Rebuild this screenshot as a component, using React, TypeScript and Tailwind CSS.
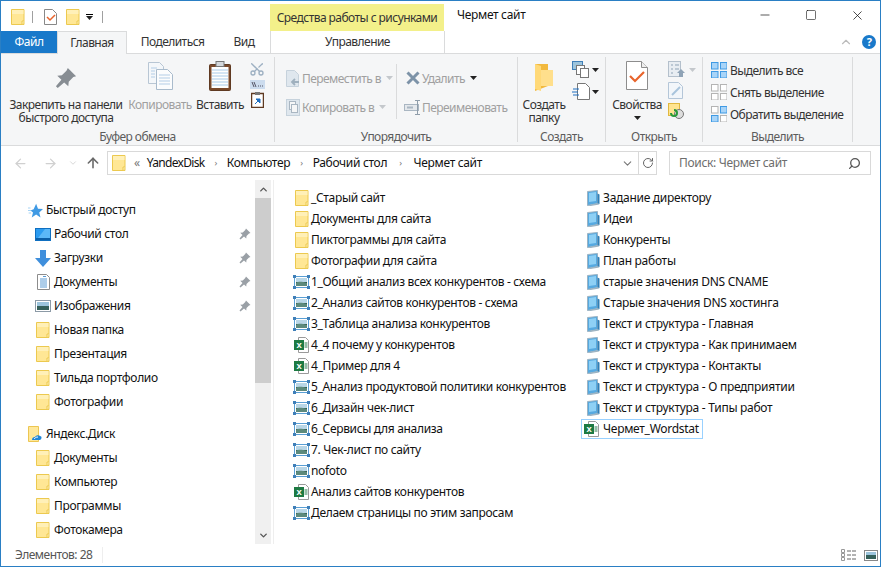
import { ChevronDown, ChevronUp, ArrowLeft, ArrowRight, ArrowUp, RotateCw, Search, Scissors, Minus, X, Square } from "lucide-react";

const Folder = ({ size = 16 }: { size?: number }) => (
  <svg width={size} height={size} viewBox="0 0 16 16" className="shrink-0">
    <path d="M1.500 .5h12.500v15H1.500z" fill="#ffe795" stroke="#ecc94f" />
    <path d="M2 1h11.500v4H2z" fill="#fff0b8" />
    <path d="M12 15.500v-3.500h2" fill="#fff3c4" stroke="#ecc94f" />
  </svg>
);

const PicFile = () => (
  <svg width="17" height="16" viewBox="0 0 17 16" className="shrink-0">
    <rect x="1.500" y="2.500" width="14" height="11" fill="#fff" stroke="#5a9fd4" />
    <rect x="3" y="4" width="11" height="4" fill="#b9d6e6" />
    <rect x="3" y="8" width="11" height="4" fill="#2e5a4c" />
    <path d="M3 9c3-2 6-1 11 0v3H3z" fill="#5d8a7c" />
    <path d="M0 1h3v3H0zM14 1h3v3h-3zM0 12h3v3H0zM14 12h3v3h-3z" fill="#3f7fb8" />
  </svg>
);

const BlueFile = () => (
  <svg width="16" height="16" viewBox="0 0 16 16" className="shrink-0">
    <path d="M2.500 1.500l10-1v13l-10 2z" fill="#56a9e0" stroke="#9db3c2" />
    <path d="M4 3l7-1v9l-7 1z" fill="#8ed0f5" />
    <path d="M12.500 3.500l2 1v9.500l-2-.5z" fill="#2f7fb6" />
    <path d="M2.500 15.500l10-2 2 1-9 1.500z" fill="#9db3c2" />
  </svg>
);

const ExcelFile = ({ size = 16 }: { size?: number }) => (
  <svg width={size} height={size} viewBox="0 0 16 16" className="shrink-0">
    <path d="M4.500 .5h7l3 3v12h-10z" fill="#fff" stroke="#9a9a9a" />
    <path d="M10.500 6h3M10.500 8h3M10.500 10h3" stroke="#2a7d4f" fill="none" />
    <rect x="0" y="3" width="10" height="10" fill="#1d7a43" />
    <text x="5" y="11" textAnchor="middle" fontSize="9.500" fontWeight="700" fill="#fff" fontFamily="Liberation Sans">x</text>
  </svg>
);

const GreyPin = ({ size = 12, color = "#9aa0a6" }: { size?: number; color?: string }) => (
  <svg width={size} height={size} viewBox="0 0 24 24">
    <path d="M14 1l9 9-3 1-5 5-.5 5L10 17 3 23l-2-2 6-7-4.500-4.500 5-.5 5-5z" fill={color} />
  </svg>
);

const DesktopIcon = () => (
  <svg width="16" height="13" viewBox="0 0 16 13" className="shrink-0">
    <rect x=".5" y=".5" width="15" height="12" fill="#2b9bf0" stroke="#0f6fc0" />
    <path d="M10 1L3 10h12V1z" fill="#5cb8f8" />
    <rect x="1" y="10" width="14" height="2" fill="#0c5fa8" />
  </svg>
);

const DownloadIcon = () => (
  <svg width="16" height="17" viewBox="0 0 16 17" className="shrink-0">
    <path d="M5 0h6v8h5l-8 9-8-9h5z" fill="#3f8fdc" />
  </svg>
);

const DocsIcon = () => (
  <svg width="13" height="16" viewBox="0 0 13 16" className="shrink-0">
    <path d="M.5.5h9l3 3v12H.5z" fill="#fff" stroke="#8c8c8c" />
    <path d="M3 5h7M3 7h7M3 9h7M3 11h7M3 13h7" stroke="#5a9bd4" />
    <path d="M6 2.500h3" stroke="#5a9bd4" />
  </svg>
);

const ImagesIcon = () => (
  <svg width="16" height="12" viewBox="0 0 16 12" className="shrink-0">
    <rect x=".5" y=".5" width="15" height="11" fill="#fff" stroke="#8c9aa6" />
    <rect x="2" y="2" width="12" height="4" fill="#9cc4dc" />
    <rect x="2" y="6" width="12" height="4" fill="#35605a" />
  </svg>
);

const QuickStar = () => (
  <svg width="15" height="15" viewBox="0 0 24 24" className="shrink-0">
    <path d="M13 1l3 8 8 .5-6 5.500 2 8-7-4.500L6 23l2-8-4-3 5-2z" fill="#3f9ae4" />
    <path d="M0 12h5M1 16h4M0 8h4" stroke="#9fd0f4" strokeWidth="1.500" />
  </svg>
);

const YandexFolder = () => (
  <svg width="16" height="16" viewBox="0 0 16 16" className="shrink-0">
    <path d="M1.500 .5h10v15h-10z" fill="#ffe89a" stroke="#ecc652" />
    <path d="M5 14c0-2 1-3 3-3 1-2 4-2 5-1 2 0 2 3 0 4z" fill="#1f86d8" />
    <path d="M7 13c1-1 2-2 4-2" stroke="#fff" fill="none" />
  </svg>
);

const PasteIcon = () => (
  <svg width="22" height="30" viewBox="0 0 22 30">
    <rect x=".5" y="3.500" width="21" height="26" rx="1" fill="#7a4a2c" stroke="#5f3a22" />
    <rect x="2.500" y="6" width="17" height="21" fill="#fff" />
    <path d="M3 9h16M3 12h16M3 15h16M3 18h16M3 21h16M3 24h16" stroke="#a8cbea" />
    <rect x="7" y=".5" width="8" height="5" fill="#d4d8dc" stroke="#777" />
  </svg>
);

const CopyBig = () => (
  <svg width="25" height="28" viewBox="0 0 25 28">
    <path d="M.5.5h11l4 4v17H.5z" fill="#f4f7fa" stroke="#b8c6d4" />
    <path d="M8.500 7.500h11l5 5v15h-16z" fill="#fbfcfd" stroke="#a9bbcc" />
    <path d="M3 6h6M3 9h4M3 12h4M3 15h4M11 13h11M11 16h11M11 19h11M11 22h11" stroke="#b3cde6" />
  </svg>
);

const PropsIcon = () => (
  <svg width="22" height="29" viewBox="0 0 22 29">
    <path d="M.5.5h15l6 6v22H.5z" fill="#fff" stroke="#8d8d8d" />
    <path d="M15.500 .5v6h6" fill="#eee" stroke="#8d8d8d" />
    <path d="M4 15l5 5 9-9" fill="none" stroke="#e8642c" strokeWidth="2.200" />
  </svg>
);

const Caret = ({ light = false }: { light?: boolean }) => (
  <svg width="7" height="4" viewBox="0 0 7 4" className="shrink-0">
    <path d="M0 0h7L3.500 4z" fill={light ? "#c4c8cc" : "#222"} />
  </svg>
);

const MoveIcon = () => (
  <svg width="14" height="17" viewBox="0 0 14 17" className="shrink-0">
    <path d="M.5.5h8l4 4v12H.5z" fill="#dfe7ee" stroke="#c6d2dc" />
    <path d="M13 12H7M9 9l-3 3 3 3" stroke="#9fb0be" strokeWidth="1.800" fill="none" />
  </svg>
);
const CopyToIcon = () => (
  <svg width="14" height="17" viewBox="0 0 14 17" className="shrink-0">
    <rect x=".5" y=".5" width="13" height="16" fill="#dfe7ee" stroke="#c6d2dc" />
    <rect x="3.500" y="2.500" width="6" height="8" fill="#f5f6f7" stroke="#a9b6c2" />
    <rect x="5.500" y="5.500" width="6" height="8" fill="#f5f6f7" stroke="#a9b6c2" />
  </svg>
);
const DeleteIcon = () => (
  <svg width="14" height="14" viewBox="0 0 14 14" className="shrink-0">
    <path d="M1.500 1.500l11 11M12.500 1.500l-11 11" stroke="#7d93a8" strokeWidth="3" />
  </svg>
);
const RenameIcon = () => (
  <svg width="18" height="15" viewBox="0 0 18 15" className="shrink-0">
    <rect x=".5" y="4.500" width="14" height="6" fill="#e4e8ec" stroke="#a9b6c2" />
    <path d="M11 .5h5M13.500 .5v14M11 14.500h5" stroke="#8f9daa" />
    <rect x="3" y="6.500" width="6" height="2" fill="#a9b6c2" />
  </svg>
);
const SelectGrid = ({ fills }: { fills: [boolean, boolean, boolean, boolean] }) => (
  <svg width="16" height="16" viewBox="0 0 16 16" className="shrink-0">
    {[[0, 0], [9, 0], [0, 9], [9, 9]].map(([x, y], i) => (
      <rect key={i} x={x + 0.5} y={y + 0.5} width="6.500" height="6.500"
        fill={fills[i] ? "#a8d4f8" : "#fff"} stroke={fills[i] ? "#3f9ae4" : "#b4b4b4"} />
    ))}
  </svg>
);

const group1 = [
  { name: "_Старый сайт", kind: "folder" },
  { name: "Документы для сайта", kind: "folder" },
  { name: "Пиктограммы для сайта", kind: "folder" },
  { name: "Фотографии для сайта", kind: "folder" },
  { name: "1_Общий анализ всех конкурентов - схема", kind: "pic" },
  { name: "2_Анализ сайтов конкурентов - схема", kind: "pic" },
  { name: "3_Таблица анализа конкурентов", kind: "pic" },
  { name: "4_4 почему у конкурентов", kind: "xls" },
  { name: "4_Пример для 4", kind: "xls" },
  { name: "5_Анализ продуктовой политики конкурентов", kind: "pic" },
  { name: "6_Дизайн чек-лист", kind: "pic" },
  { name: "6_Сервисы для анализа", kind: "pic" },
  { name: "7. Чек-лист по сайту", kind: "pic" },
  { name: "nofoto", kind: "pic" },
  { name: "Анализ сайтов конкурентов", kind: "xls" },
  { name: "Делаем страницы по этим запросам", kind: "pic" },
];

const group2 = [
  "Задание директору",
  "Идеи",
  "Конкуренты",
  "План работы",
  "старые значения DNS CNAME",
  "Старые значения DNS хостинга",
  "Текст и структура - Главная",
  "Текст и структура - Как принимаем",
  "Текст и структура - Контакты",
  "Текст и структура - О предприятии",
  "Текст и структура - Типы работ",
];

const quick = [
  { name: "Рабочий стол", icon: <DesktopIcon />, pin: true },
  { name: "Загрузки", icon: <DownloadIcon />, pin: true },
  { name: "Документы", icon: <DocsIcon />, pin: true },
  { name: "Изображения", icon: <ImagesIcon />, pin: true },
  { name: "Новая папка", icon: <Folder /> },
  { name: "Презентация", icon: <Folder /> },
  { name: "Тильда портфолио", icon: <Folder /> },
  { name: "Фотографии", icon: <Folder /> },
];

const disk = ["Документы", "Компьютер", "Программы", "Фотокамера"];

function GroupLabel({ children }: { children: string }) {
  return <div className="h-[14px] text-center text-[#5c5c5c] leading-[17px] whitespace-nowrap">{children}</div>;
}

function SmallRow({ icon, label, caret, dim, select }: { icon: React.ReactNode; label: string; caret?: "dark" | "light"; dim?: boolean; select?: boolean }) {
  return (
    <div className={`flex items-center h-[22px] whitespace-nowrap ${select ? "gap-[2px]" : "gap-0"}`}>
      <span className="w-[18px] flex justify-center">{icon}</span>
      <span className={dim ? "text-[#a0a0a0]" : "text-[#333]"}>{label}</span>
      {caret && <span className="ml-[5px]"><Caret light={caret === "light"} /></span>}
    </div>
  );
}

function NavRow({ icon, label, pin, header }: { icon: React.ReactNode; label: string; pin?: boolean; header?: boolean }) {
  return (
    <div className={`flex items-center h-[24px] pr-[4px] ${header ? "pl-[26px]" : "pl-[34px]"}`}>
      <span className="w-[16px] flex justify-center">{icon}</span>
      <span className="ml-[3px] flex-1 text-[#111]">{label}</span>
      {pin && <GreyPin />}
    </div>
  );
}

export default function App() {
  return (
    <div className="w-[881px] h-[567px] overflow-hidden bg-white flex flex-col border border-[#2a7fc4] text-[12px] text-[#1a1a1a] tracking-[-0.33px]" style={{ fontFamily: '"Noto Sans", sans-serif' }}>
      {/* title */}
      <div className="flex h-[30px] shrink-0">
        <div className="w-[269px] flex items-center pl-[9px] pt-[1px]">
          <Folder />
          <span className="ml-[6px] w-px h-[12px] bg-[#a0a0a0]" />
          <span className="ml-[11px]">
            <svg width="13" height="16" viewBox="0 0 13 16"><path d="M.5.5h8l4 4v11H.5z" fill="#fff" stroke="#888" /><path d="M3 8l3 3 5-5" stroke="#e8642c" strokeWidth="1.500" fill="none" /></svg>
          </span>
          <span className="ml-[8px]"><Folder /></span>
          <span className="ml-[5px] flex flex-col items-center gap-[1px]">
            <span className="w-[7px] h-px bg-black" />
            <Caret />
          </span>
          <span className="ml-[9px] w-px h-[12px] bg-[#a0a0a0]" />
        </div>
        <div className="mt-[3px] w-[174px] h-[27px] bg-[#f3f08a] flex items-center justify-center text-[#333] tracking-[-0.55px]">Средства работы с рисунками</div>
        <div className="ml-[13px] pt-[5px] text-[#111]">Чермет сайт</div>
        <div className="ml-auto flex items-start pt-[1px]">
          <span className="w-[46px] h-[26px] flex items-center justify-center"><Minus size={14} strokeWidth={1.2} color="#111" /></span>
          <span className="w-[46px] h-[26px] flex items-center justify-center"><Square size={12} strokeWidth={1.2} color="#111" /></span>
          <span className="w-[46px] h-[26px] flex items-center justify-center"><X size={15} strokeWidth={1.2} color="#111" /></span>
        </div>
      </div>
      {/* tabs */}
      <div className="flex h-[23px] shrink-0 items-stretch border-b border-[#dadbdc] tracking-[-0.55px]">
        <div className="w-[56px] bg-[#1979ca] text-white flex items-center justify-center">Файл</div>
        <div className="w-[70px] h-[23px] bg-[#f5f6f7] border-x border-t border-[#dadbdc] flex items-center justify-center text-[#333]">Главная</div>
        <div className="w-[91px] flex items-center justify-center text-[#333]">Поделиться</div>
        <div className="w-[52px] flex items-center justify-center text-[#333]">Вид</div>
        <div className="w-[175px] border-x border-[#dadbdc] flex items-center justify-center text-[#333]">Управление</div>
        <div className="ml-auto flex items-center pr-[4px] gap-[9px]">
          <ChevronUp size={14} color="#bbb" />
          <span className="w-[14px] h-[14px] rounded-full bg-[#1979ca] text-white font-bold text-[11px] flex items-center justify-center">?</span>
        </div>
      </div>
      {/* ribbon */}
      <div className="flex h-[92px] shrink-0 bg-[#f5f6f7] border-b border-[#dadbdc] pt-[3px] pb-[3px] leading-[13px] tracking-[-0.55px]">
        {/* clipboard */}
        <div className="w-[274px] border-r border-[#dadbdc] flex flex-col">
          <div className="flex flex-1 pl-[7px] pt-[3px]">
            <div className="w-[116px] flex flex-col items-center">
              <div className="h-[37px] pt-[7px]"><GreyPin size={22} color="#878d93" /></div>
              <div className="mt-[1px] text-center text-[#333] whitespace-nowrap">Закрепить на панели<br />быстрого доступа</div>
            </div>
            <div className="w-[72px] flex flex-col items-center">
              <div className="h-[37px] pt-[2px]"><CopyBig /></div>
              <div className="mt-[1px] text-[#a0a0a0]">Копировать</div>
            </div>
            <div className="w-[48px] flex flex-col items-center">
              <div className="h-[37px] pt-[1px]"><PasteIcon /></div>
              <div className="mt-[1px] text-[#333]">Вставить</div>
            </div>
            <div className="w-[26px] flex flex-col items-center gap-[3px] pt-[1px]">
              <Scissors size={16} color="#9db0c2" className="-rotate-90" />
              <svg width="15" height="9" viewBox="0 0 15 9"><rect width="15" height="9" fill="#ccdcee" /><path d="M2 2l2 5M4 2l2 5M8 6h1M10 6h1M12 6h1" stroke="#556" /></svg>
              <svg width="13" height="16" viewBox="0 0 13 16"><rect x=".5" y="1.500" width="12" height="14" fill="#fff" stroke="#5f3a22" strokeWidth="1.500" /><rect x="4" y="0" width="5" height="3" fill="#777" /><path d="M4 12l4-4M5 7h4v4z" stroke="#1f6fc0" fill="#1f6fc0" /></svg>
            </div>
          </div>
          <GroupLabel>Буфер обмена</GroupLabel>
        </div>
        {/* organize */}
        <div className="w-[243px] border-r border-[#dadbdc] flex flex-col">
          <div className="flex flex-1 pl-[9px] pt-[7px]">
            <div className="w-[113px] h-[55px] pt-[3px] border-r border-[#dadbdc] flex flex-col gap-[7px]">
              <SmallRow icon={<MoveIcon />} label="Переместить в" caret="light" dim />
              <SmallRow icon={<CopyToIcon />} label="Копировать в" caret="light" dim />
            </div>
            <div className="pl-[7px] pt-[3px] flex flex-col gap-[7px]">
              <SmallRow icon={<DeleteIcon />} label="Удалить" caret="dark" dim />
              <SmallRow icon={<RenameIcon />} label="Переименовать" dim />
            </div>
          </div>
          <GroupLabel>Упорядочить</GroupLabel>
        </div>
        {/* create */}
        <div className="w-[88px] border-r border-[#dadbdc] flex flex-col">
          <div className="flex flex-1 pt-[3px]">
            <div className="w-[52px] flex flex-col items-center">
              <div className="h-[37px] pt-[4px]">
                <svg width="20" height="28" viewBox="0 0 20 28"><path d="M1 0h13v22l-13 5z" fill="#f2b93e" /><path d="M1 0l6 2v25l-6-2z" fill="#ffd978" /><path d="M7 6h12v16H7z" fill="#ffdf8c" /></svg>
              </div>
              <div className="mt-[1px] text-center text-[#333]">Создать<br />папку</div>
            </div>
            <div className="pl-[2px] flex flex-col gap-[5px] pt-[1px]">
              <div className="flex items-center gap-[2px]">
                <svg width="18" height="17" viewBox="0 0 18 17"><rect x=".5" y=".5" width="10" height="8" fill="#9cc4dc" stroke="#3f7fb8" /><rect x="4.500" y="4.500" width="8" height="9" fill="#fff" stroke="#777" /><rect x="8.500" y="7.500" width="8" height="9" fill="#fff" stroke="#777" /></svg>
                <Caret />
              </div>
              <div className="flex items-center gap-[2px]">
                <svg width="18" height="17" viewBox="0 0 18 17"><path d="M5.500 .5h8l4 4v12h-12z" fill="#fff" stroke="#777" /><path d="M1 6h6M0 9h6M1 12h6" stroke="#1f6fc0" /></svg>
                <Caret />
              </div>
            </div>
          </div>
          <GroupLabel>Создать</GroupLabel>
        </div>
        {/* open */}
        <div className="w-[97px] border-r border-[#dadbdc] flex flex-col">
          <div className="flex flex-1 pt-[3px]">
            <div className="w-[62px] flex flex-col items-center">
              <div className="h-[37px] pt-[1px]"><PropsIcon /></div>
              <div className="mt-[1px] text-center text-[#333]">Свойства</div>
              <div className="mt-[5px]"><Caret /></div>
            </div>
            <div className="flex flex-col gap-[4px] pt-[1px]">
              <div className="flex items-center gap-[3px]">
                <svg width="18" height="17" viewBox="0 0 18 17"><rect x=".5" y=".5" width="12" height="15" fill="#e8edf2" stroke="#b4c0cc" /><path d="M3 4h2M3 8h2M3 12h2M7 4h4M7 8h4" stroke="#8fa3b6" /><path d="M13 8l4 4h-2v4h-4v-4H9z" fill="#8fa3b6" /></svg>
                <Caret light />
              </div>
              <svg width="16" height="17" viewBox="0 0 16 17"><path d="M.5.5h10l4 4v12H.5z" fill="#f2f6fa" stroke="#b4c6d8" /><path d="M4 13l8-8" stroke="#a9c4dc" strokeWidth="2" /></svg>
              <svg width="16" height="16" viewBox="0 0 16 16"><rect x=".5" y=".5" width="11" height="12" fill="#ffe490" stroke="#e0b840" /><circle cx="11" cy="11" r="4.500" fill="#ddd" stroke="#777" /><path d="M3 10a3 3 0 1 0 3-3" stroke="#2a9a3a" strokeWidth="2" fill="none" /></svg>
            </div>
          </div>
          <GroupLabel>Открыть</GroupLabel>
        </div>
        {/* select */}
        <div className="w-[150px] border-r border-[#dadbdc] flex flex-col">
          <div className="flex flex-col flex-1 pl-[7px] pt-[2px]">
            <SmallRow select icon={<SelectGrid fills={[true, true, true, true]} />} label="Выделить все" />
            <SmallRow select icon={<SelectGrid fills={[false, false, false, false]} />} label="Снять выделение" />
            <SmallRow select icon={<SelectGrid fills={[false, true, true, false]} />} label="Обратить выделение" />
          </div>
          <GroupLabel>Выделить</GroupLabel>
        </div>
      </div>
      {/* nav */}
      <div className="flex h-[34px] shrink-0 items-start pt-[5px] pr-[9px]">
        <div className="w-[106px] h-[24px] flex items-center pl-[12px]">
          <ArrowLeft size={15} color="#d0d0d0" />
          <ArrowRight size={15} color="#d0d0d0" className="ml-[15px]" />
          <ChevronDown size={10} color="#d0d0d0" className="ml-[10px]" />
          <ArrowUp size={16} strokeWidth={2.4} color="#6a6a6a" className="ml-[7px]" />
        </div>
        <div className="w-[550px] h-[24px] border border-[#d9d9d9] flex items-center pl-[3px] text-[#111]">
          <Folder />
          <span className="ml-[7px] text-[#777]">«</span>
          <span className="ml-[7px] tracking-[-0.7px]">YandexDisk</span>
          <span className="mx-[10px] text-[#777] text-[9px]">›</span>
          <span>Компьютер</span>
          <span className="mx-[10px] text-[#777] text-[9px]">›</span>
          <span>Рабочий стол</span>
          <span className="mx-[12px] text-[#777] text-[9px]">›</span>
          <span>Чермет сайт</span>
          <span className="ml-auto flex items-center h-full">
            <ChevronDown size={13} color="#777" />
            <span className="ml-[4px] w-px h-full bg-[#d9d9d9]" />
            <span className="w-[17px] flex justify-center"><RotateCw size={12} color="#666" /></span>
          </span>
        </div>
        <div className="ml-[12px] flex-1 h-[24px] border border-[#d9d9d9] flex items-center pl-[9px] pr-[9px] text-[#6d6d6d]">
          <span>Поиск: Чермет сайт</span>
          <Search size={13} strokeWidth={2.4} color="#555" className="ml-auto -scale-x-100" />
        </div>
      </div>
      {/* main */}
      <div className="flex flex-1 min-h-0">
        <div className="w-[254px] shrink-0 pt-[18px] overflow-hidden">
          <NavRow header icon={<QuickStar />} label="Быстрый доступ" />
          {quick.map((q) => <NavRow key={q.name} icon={q.icon} label={q.name} pin={q.pin} />)}
          <div className="h-[8px]" />
          <NavRow header icon={<YandexFolder />} label="Яндекс.Диск" />
          {disk.map((d) => <NavRow key={d} icon={<Folder />} label={d} />)}
        </div>
        <div className="w-[16px] shrink-0 bg-[#f0f0f0] flex flex-col">
          <div className="h-[18px] flex items-center justify-center"><ChevronUp size={11} strokeWidth={3} color="#555" /></div>
          <div className="h-[185px] bg-[#cdcdcd]" />
          <div className="mt-auto h-[18px] flex items-center justify-center"><ChevronDown size={11} strokeWidth={3} color="#555" /></div>
        </div>
        <div className="ml-[2px] w-px bg-[#eeeeee]" />
        <div className="flex-1 flex pl-[19px] pt-[7px] pr-[2px]">
          <div className="w-[288px] flex flex-col">
            {group1.map((f) => (
              <div key={f.name} className="flex items-center h-[21px]">
                <span className="w-[17px] flex justify-center">
                  {f.kind === "folder" ? <Folder /> : f.kind === "xls" ? <ExcelFile /> : <PicFile />}
                </span>
                <span className="ml-[1px] whitespace-nowrap text-[#111]">{f.name}</span>
              </div>
            ))}
          </div>
          <div className="flex flex-col pl-[4px] tracking-[-0.28px]">
            {group2.map((f) => (
              <div key={f} className="flex items-center h-[21px]">
                <span className="w-[17px] flex justify-start"><BlueFile /></span>
                <span className="ml-[1px] whitespace-nowrap text-[#111]">{f}</span>
              </div>
            ))}
            <div className="flex items-center h-[20px] mt-[1px] -ml-[4px] w-[122px] border border-[#99d1ff] pl-[2px]">
              <ExcelFile />
              <span className="ml-[3px] whitespace-nowrap text-[#111]">Чермет_Wordstat</span>
            </div>
          </div>
        </div>
      </div>
      {/* status */}
      <div className="h-[22px] shrink-0 flex items-center pl-[14px] pr-[2px] text-[#555] tracking-[-0.5px]">
        <span>Элементов: 28</span>
        <span className="ml-[10px] w-px h-[16px] bg-[#eeeeee]" />
        <span className="ml-auto flex items-center gap-[7px]">
          <svg width="16" height="12" viewBox="0 0 16 12"><path d="M.5.500h3v3h-3zM.5 4.500h3v3h-3zM.5 8.500h3v3h-3z" fill="#fff" stroke="#999" /><path d="M6 2h4M11 2h4M6 6h4M11 6h4M6 10h4M11 10h4" stroke="#666" /></svg>
          <svg width="14" height="11" viewBox="0 0 14 11"><rect x=".5" y=".5" width="13" height="10" fill="#fff" stroke="#888" /><rect x="2" y="2" width="10" height="3" fill="#9cc4dc" /><rect x="2" y="5" width="10" height="4" fill="#35605a" /></svg>
        </span>
      </div>
    </div>
  );
}
